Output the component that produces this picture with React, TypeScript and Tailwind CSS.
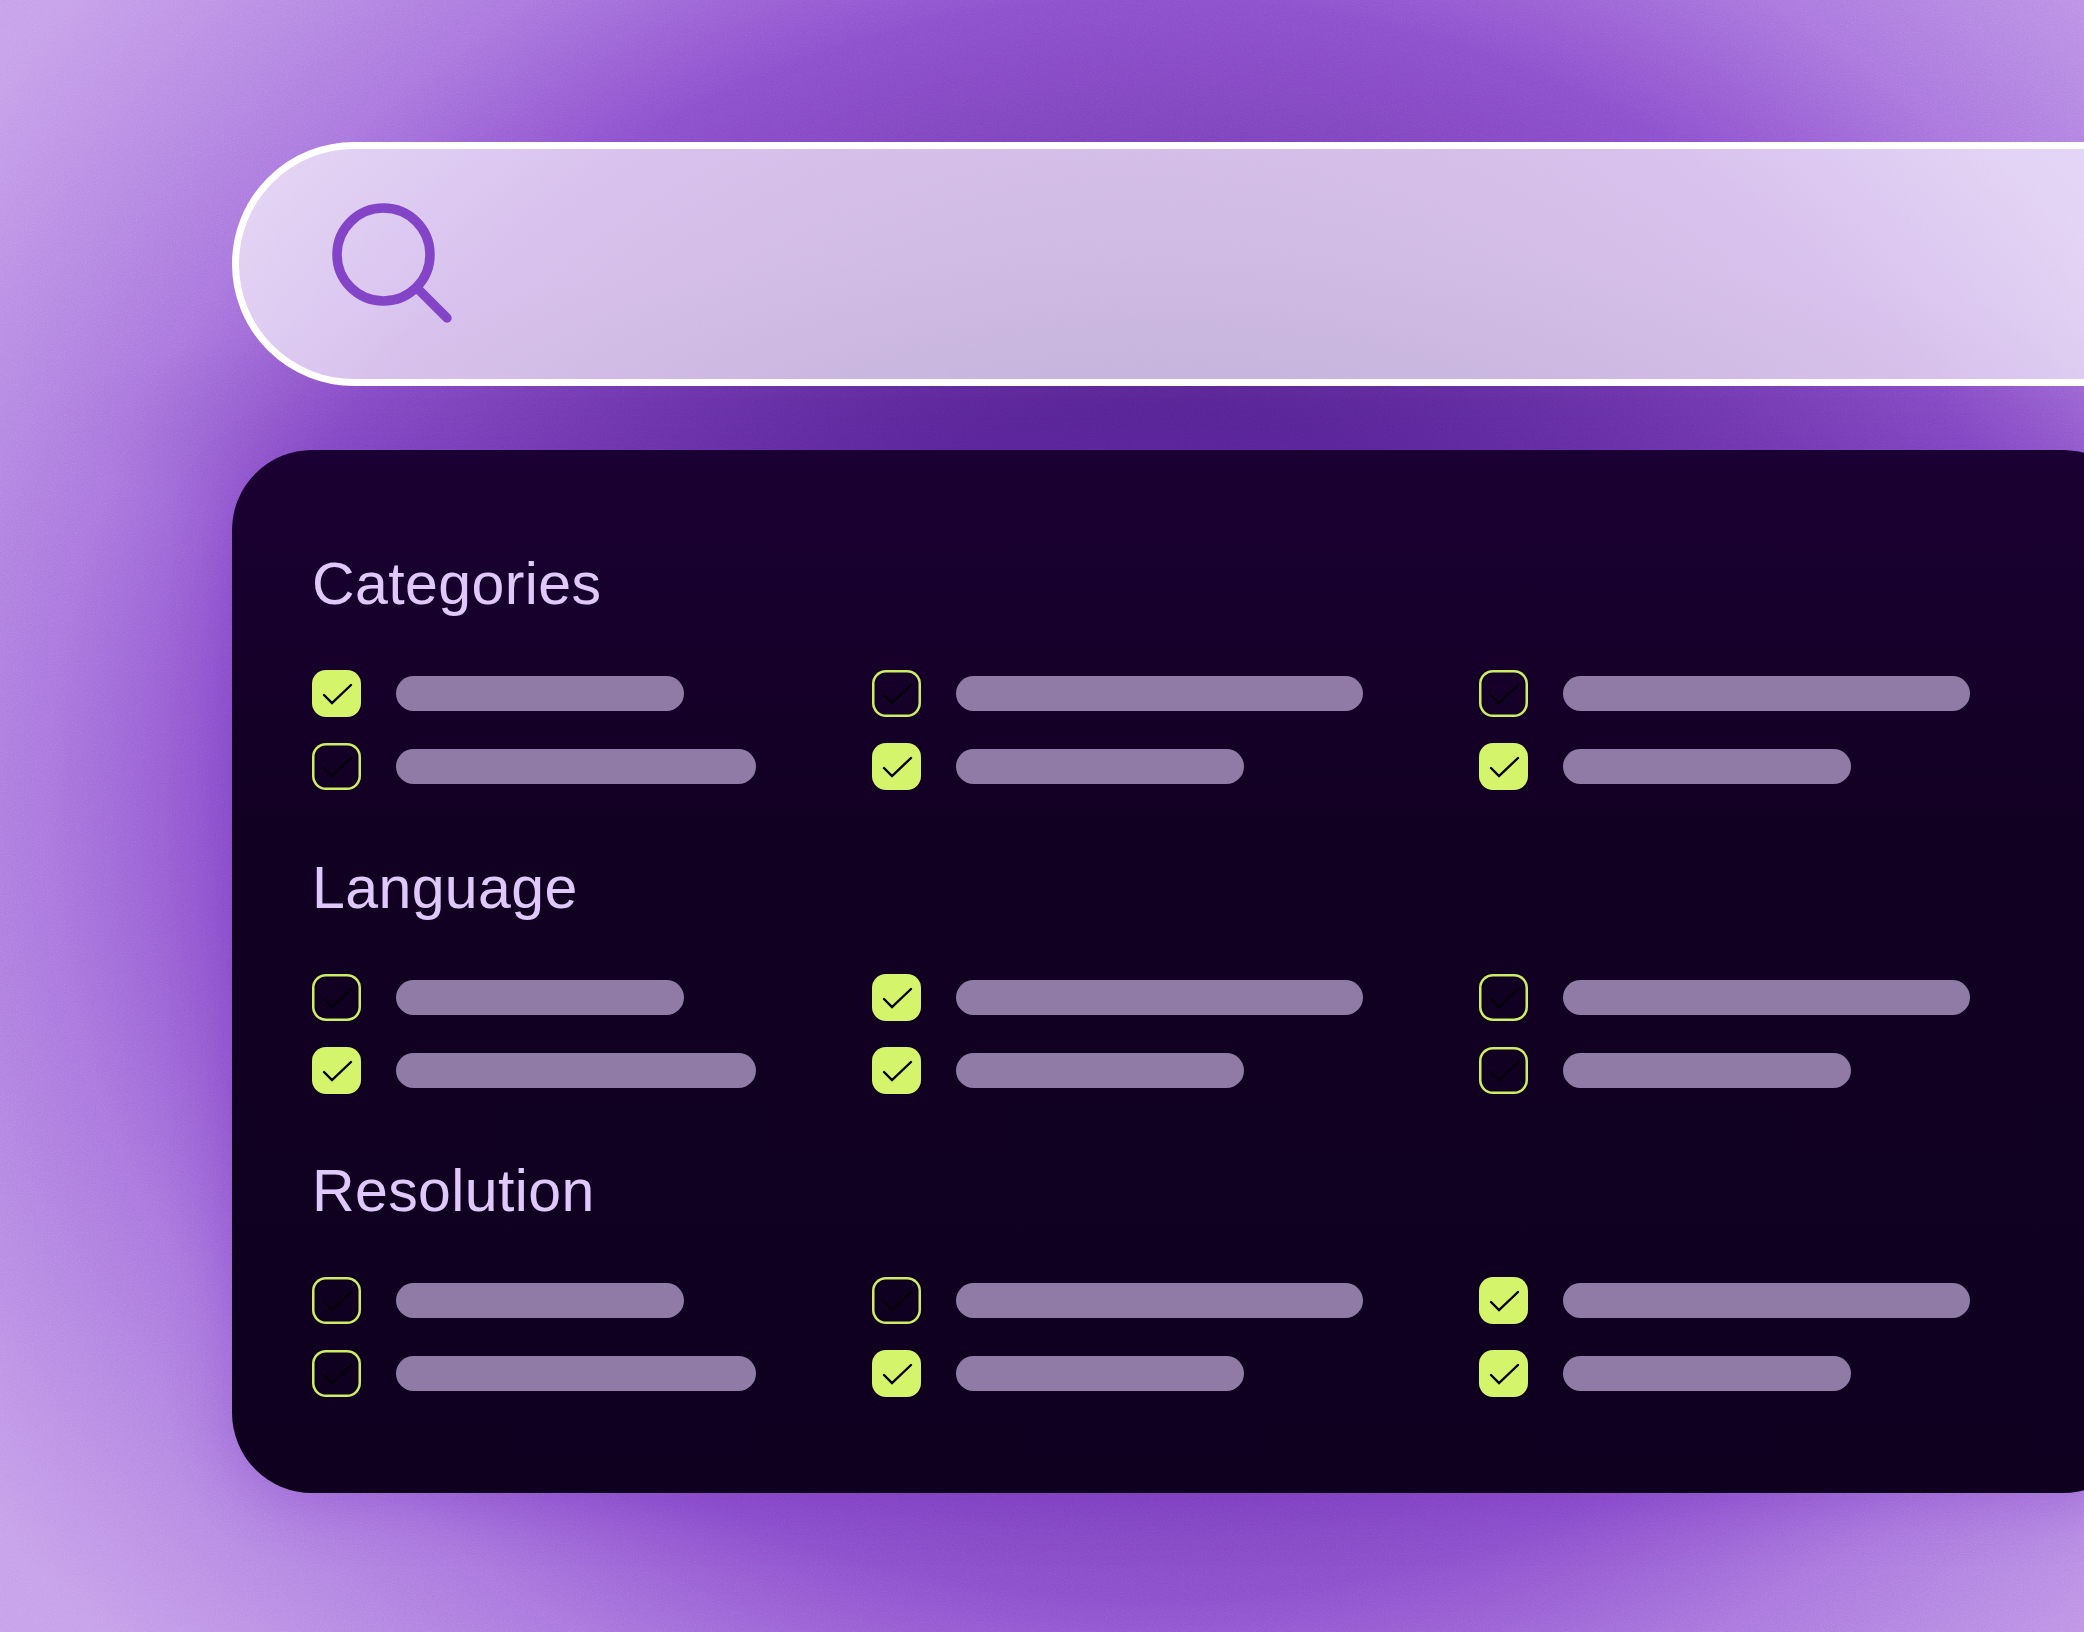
const sections = [
  {
    title: "Categories",
    rows: [
      [true, false, false],
      [false, true, true],
    ],
  },
  {
    title: "Language",
    rows: [
      [false, true, false],
      [true, true, false],
    ],
  },
  {
    title: "Resolution",
    rows: [
      [false, false, true],
      [false, true, true],
    ],
  },
];

// bar widths per row and column
const barWidths = [
  ["w-[288px]", "w-[407px]", "w-[407px]"],
  ["w-[360px]", "w-[288px]", "w-[288px]"],
];

function Checkbox({ checked }: { checked: boolean }) {
  return (
    <div
      className={`h-[47px] w-[49px] shrink-0 rounded-[14px] ${
        checked ? "bg-[#d4f46c]" : "shadow-[inset_0_0_0_2.5px_#cdee62]"
      }`}
    >
      <svg width="49" height="47" viewBox="0 0 49 47" fill="none">
        <path d="M12 25L20 33L39 15" stroke="#05000b" strokeWidth="2.4" strokeLinecap="round" strokeLinejoin="miter" />
      </svg>
    </div>
  );
}

export default function App() {
  return (
    <div className="relative h-[1632px] w-[2084px] overflow-hidden bg-[radial-gradient(ellipse_1150px_170px_at_1200px_425px,rgba(70,25,130,0.38),transparent),radial-gradient(ellipse_1340px_1176px_at_1150px_800px,#5f2a9b_33%,#8a4fcc_68%,#a875dd_82%,#c6a0ea_106%)]">
      {/* grain */}
      <svg className="pointer-events-none absolute inset-0 opacity-25 mix-blend-overlay" width="2084" height="1632">
        <filter id="grain">
          <feTurbulence type="fractalNoise" baseFrequency="0.9" numOctaves="2" stitchTiles="stitch" />
          <feColorMatrix type="saturate" values="0" />
        </filter>
        <rect width="2084" height="1632" filter="url(#grain)" />
      </svg>

      <div className="relative flex w-[1911px] flex-col gap-[64px] pl-[232px] pt-[142px] box-content">
        {/* search bar */}
        <div className="flex h-[244px] w-[2100px] items-center rounded-[122px] border-[7px] border-white bg-white/65 pl-[93px]">
          <svg width="122" height="122" viewBox="0 0 122 122" fill="none" className="shrink-0">
            <circle cx="51.5" cy="51.5" r="46.5" stroke="#8344c8" strokeWidth="9.5" />
            <path d="M86 86L115 115" stroke="#8344c8" strokeWidth="9.5" strokeLinecap="round" />
          </svg>
        </div>

        {/* filters */}
        <div className="flex h-[1043px] flex-col gap-[63.5px] rounded-[80px] bg-[linear-gradient(180deg,#1b0033_0%,#110021_40%,#100020_100%)] pl-[80px] pt-[100px] shadow-[0_10px_60px_rgba(110,40,190,0.3)]">
          {sections.map((section) => (
            <section key={section.title}>
              <h2 className="mb-[52px] font-['Liberation_Sans',Arial,sans-serif] text-[59px] font-normal leading-[68px] tracking-[0.4px] text-[#e0c8fb]">
                {section.title}
              </h2>
              <div className="flex flex-col gap-[26px]">
                {section.rows.map((row, r) => (
                  <div key={r} className="grid grid-cols-[560px_607px_1fr]">
                    {row.map((checked, c) => (
                      <div key={c} className="flex h-[47px] items-center gap-[34.5px]">
                        <Checkbox checked={checked} />
                        <div className={`h-[35px] rounded-full bg-[#8f7ba6] ${barWidths[r][c]}`} />
                      </div>
                    ))}
                  </div>
                ))}
              </div>
            </section>
          ))}
        </div>
      </div>
    </div>
  );
}
